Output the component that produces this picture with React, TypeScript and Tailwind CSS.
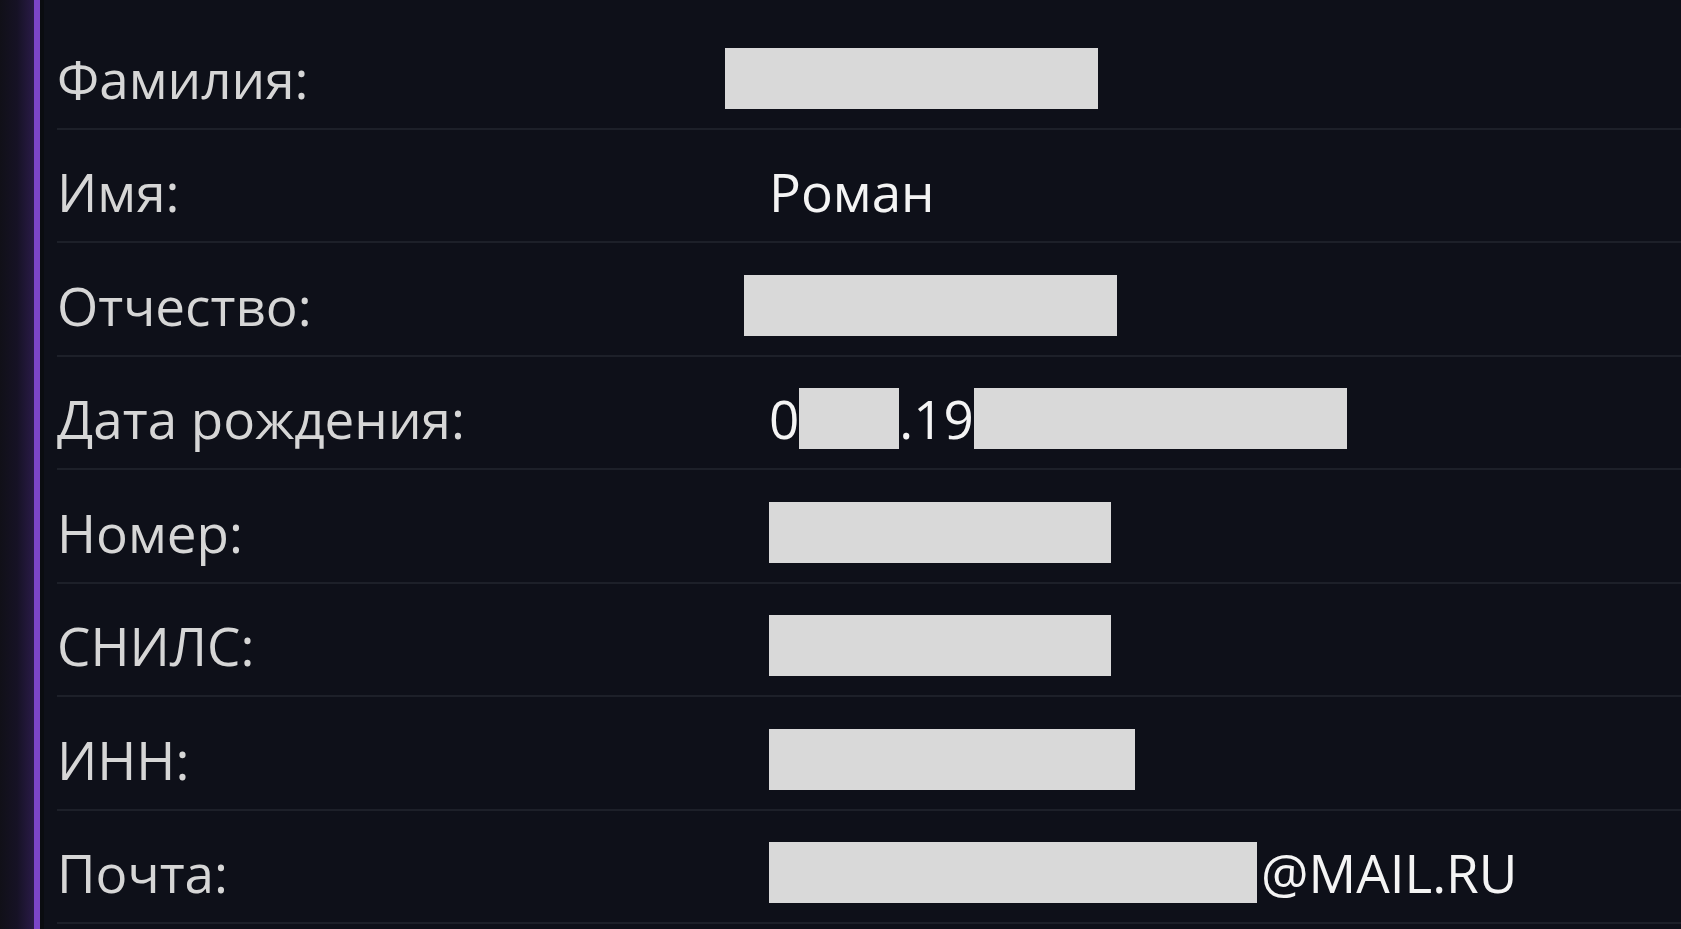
import React from 'react';

const Redact: React.FC<{ className?: string }> = ({ className = '' }) => (
  <span className={`inline-block h-[61px] bg-[#d9d9d9] ${className}`} />
);

interface RowProps {
  label: string;
  children: React.ReactNode;
}

const Row: React.FC<RowProps> = ({ label, children }) => (
  <div className="flex h-[113.5px] items-center border-b-2 border-[#1d2029] pt-[13px]">
    <div className="w-[712px] shrink-0 text-[#d6d6d6]">{label}</div>
    <div className="flex items-center text-[#f4f4f4]">{children}</div>
  </div>
);

export default function App() {
  return (
    <div
      className="flex h-[929px] w-full overflow-hidden bg-[#0e1019] text-[53px] font-medium leading-none"
      style={{ fontFamily: '"Open Sans", "Noto Sans", sans-serif' }}
    >
      {/* left dark strip + accent line */}
      <div className="w-[34px] shrink-0 bg-gradient-to-r from-[#111018] via-[#161225] to-[#2a1a48]" />
      <div className="w-[6px] shrink-0 bg-[#7b45c8]" />
      <div className="w-[4px] shrink-0 bg-[#0a0c10]" />

      <main className="flex-1 pl-[13px] pt-[16px]">
        <Row label="Фамилия:">
          <Redact className="ml-[-44px] w-[373px]" />
        </Row>
        <Row label="Имя:">
          <span>Роман</span>
        </Row>
        <Row label="Отчество:">
          <Redact className="ml-[-25px] w-[373px]" />
        </Row>
        <Row label="Дата рождения:">
          <span>0</span>
          <Redact className="w-[100px]" />
          <span>.19</span>
          <Redact className="w-[373px]" />
        </Row>
        <Row label="Номер:">
          <Redact className="w-[342px]" />
        </Row>
        <Row label="СНИЛС:">
          <Redact className="w-[342px]" />
        </Row>
        <Row label="ИНН:">
          <Redact className="w-[366px]" />
        </Row>
        <Row label="Почта:">
          <Redact className="w-[488px]" />
          <span className="ml-[4px]">@MAIL.RU</span>
        </Row>
      </main>
    </div>
  );
}
